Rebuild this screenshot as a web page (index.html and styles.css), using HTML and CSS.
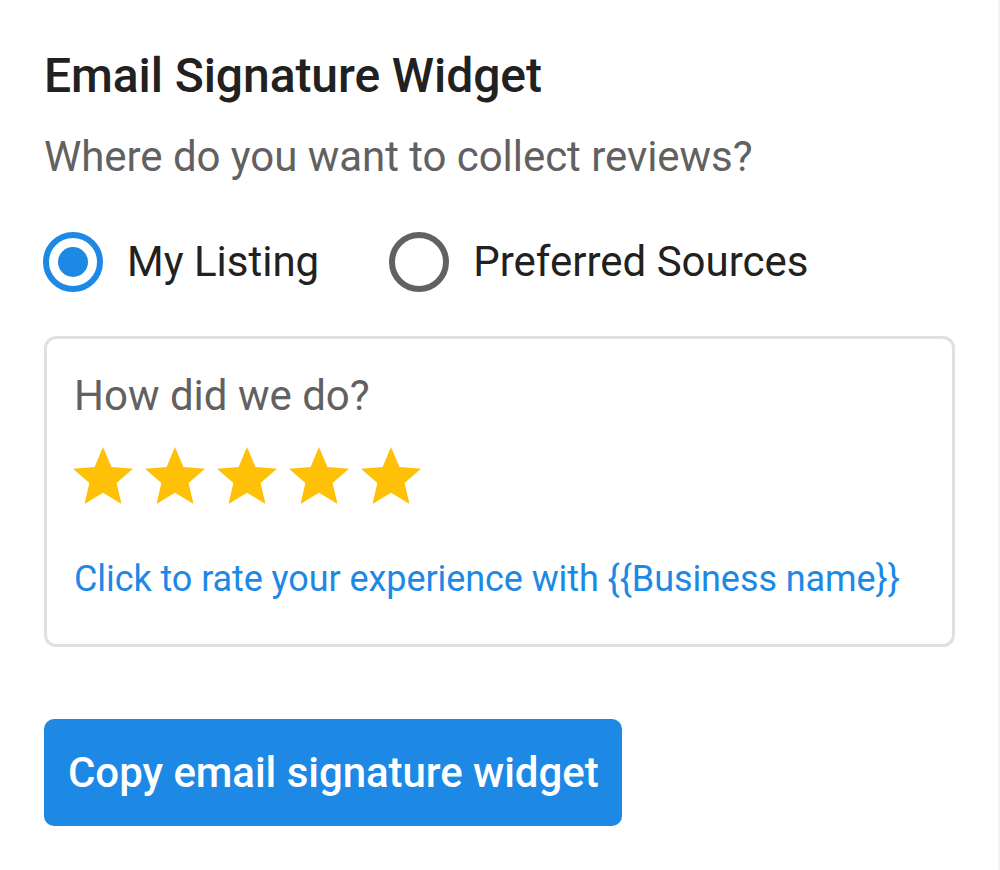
FILE: index.html
```html
<!DOCTYPE html>
<html lang="en">
<head>
<meta charset="utf-8">
<title>Email Signature Widget</title>
<link rel="stylesheet" href="styles.css">
</head>
<body>
<div class="page">
  <h1 class="title">Email Signature Widget</h1>
  <p class="subtitle">Where do you want to collect reviews?</p>
  <div class="radios">
    <label class="radio">
      <svg class="radio-icon" viewBox="2 2 20 20" width="60" height="60">
        <circle cx="12" cy="12" r="9" fill="none" stroke="#1e88e5" stroke-width="2"/>
        <circle cx="12" cy="12" r="5" fill="#1e88e5"/>
      </svg>
      <span class="radio-label">My Listing</span>
    </label>
    <label class="radio radio-second">
      <svg class="radio-icon" viewBox="2 2 20 20" width="60" height="60">
        <circle cx="12" cy="12" r="9" fill="none" stroke="#616161" stroke-width="2"/>
      </svg>
      <span class="radio-label">Preferred Sources</span>
    </label>
  </div>
  <div class="card">
    <div class="card-heading">How did we do?</div>
    <div class="stars">
      <svg class="star" viewBox="2 2 20 20" width="60" height="60"><path d="M12 17.27L18.18 21l-1.64-7.03L22 9.24l-7.19-.61L12 2 9.19 8.63 2 9.24l5.46 4.73L5.82 21z"/></svg>
      <svg class="star" viewBox="2 2 20 20" width="60" height="60"><path d="M12 17.27L18.18 21l-1.64-7.03L22 9.24l-7.19-.61L12 2 9.19 8.63 2 9.24l5.46 4.73L5.82 21z"/></svg>
      <svg class="star" viewBox="2 2 20 20" width="60" height="60"><path d="M12 17.27L18.18 21l-1.64-7.03L22 9.24l-7.19-.61L12 2 9.19 8.63 2 9.24l5.46 4.73L5.82 21z"/></svg>
      <svg class="star" viewBox="2 2 20 20" width="60" height="60"><path d="M12 17.27L18.18 21l-1.64-7.03L22 9.24l-7.19-.61L12 2 9.19 8.63 2 9.24l5.46 4.73L5.82 21z"/></svg>
      <svg class="star" viewBox="2 2 20 20" width="60" height="60"><path d="M12 17.27L18.18 21l-1.64-7.03L22 9.24l-7.19-.61L12 2 9.19 8.63 2 9.24l5.46 4.73L5.82 21z"/></svg>
    </div>
    <a class="card-link" href="#">Click to rate your experience with {{Business name}}</a>
  </div>
  <button class="copy-btn" type="button">Copy email signature widget</button>
</div>
</body>
</html>
```
FILE: styles.css
```css
html, body {
  margin: 0;
  padding: 0;
  background: #ffffff;
}

body {
  font-family: Roboto, "Liberation Sans", Arial, sans-serif;
}

.page {
  box-sizing: border-box;
  width: 1000px;
  min-height: 870px;
  padding: 48px 0 0 44px;
  border-right: 2px solid #f3f3f3;
  display: flex;
  flex-direction: column;
  align-items: flex-start;
}

.title {
  margin: 0;
  font-size: 48px;
  line-height: 56px;
  font-weight: 500;
  letter-spacing: -0.08px;
  color: #212121;
}

.subtitle {
  margin: 29px 0 0 0;
  font-size: 42px;
  line-height: 48px;
  font-weight: 400;
  letter-spacing: -0.05px;
  color: #616161;
}

.radios {
  margin-top: 51px;
  display: flex;
  align-items: center;
  height: 60px;
}

.radio {
  display: flex;
  align-items: center;
  gap: 24px;
}

.radio-icon {
  display: block;
  margin-left: -1px;
}

.radio-second {
  margin-left: 71px;
}

.radio-label {
  font-size: 42px;
  line-height: 60px;
  color: #212121;
}

.card {
  box-sizing: border-box;
  margin-top: 44px;
  width: 911px;
  height: 311px;
  border: 3px solid #e0e0e0;
  border-radius: 12px;
  padding: 32px 25px 0 27px;
  display: flex;
  flex-direction: column;
  align-items: flex-start;
}

.card-heading {
  font-size: 42px;
  line-height: 50px;
  color: #616161;
}

.stars {
  margin-top: 26px;
  margin-left: -1px;
  display: flex;
  gap: 12px;
}

.star {
  display: block;
  fill: #ffc107;
}

.card-link {
  margin-top: 50px;
  font-size: 36px;
  line-height: 44px;
  letter-spacing: -0.08px;
  color: #1e88e5;
  text-decoration: none;
}

.copy-btn {
  margin-top: 72px;
  box-sizing: border-box;
  height: 107px;
  padding: 0 23px 0 24px;
  border: none;
  border-radius: 10px;
  background: #1e88e5;
  color: #ffffff;
  font-family: Roboto, "Liberation Sans", Arial, sans-serif;
  font-size: 42px;
  font-weight: 500;
  letter-spacing: -0.05px;
  line-height: 107px;
}
```
